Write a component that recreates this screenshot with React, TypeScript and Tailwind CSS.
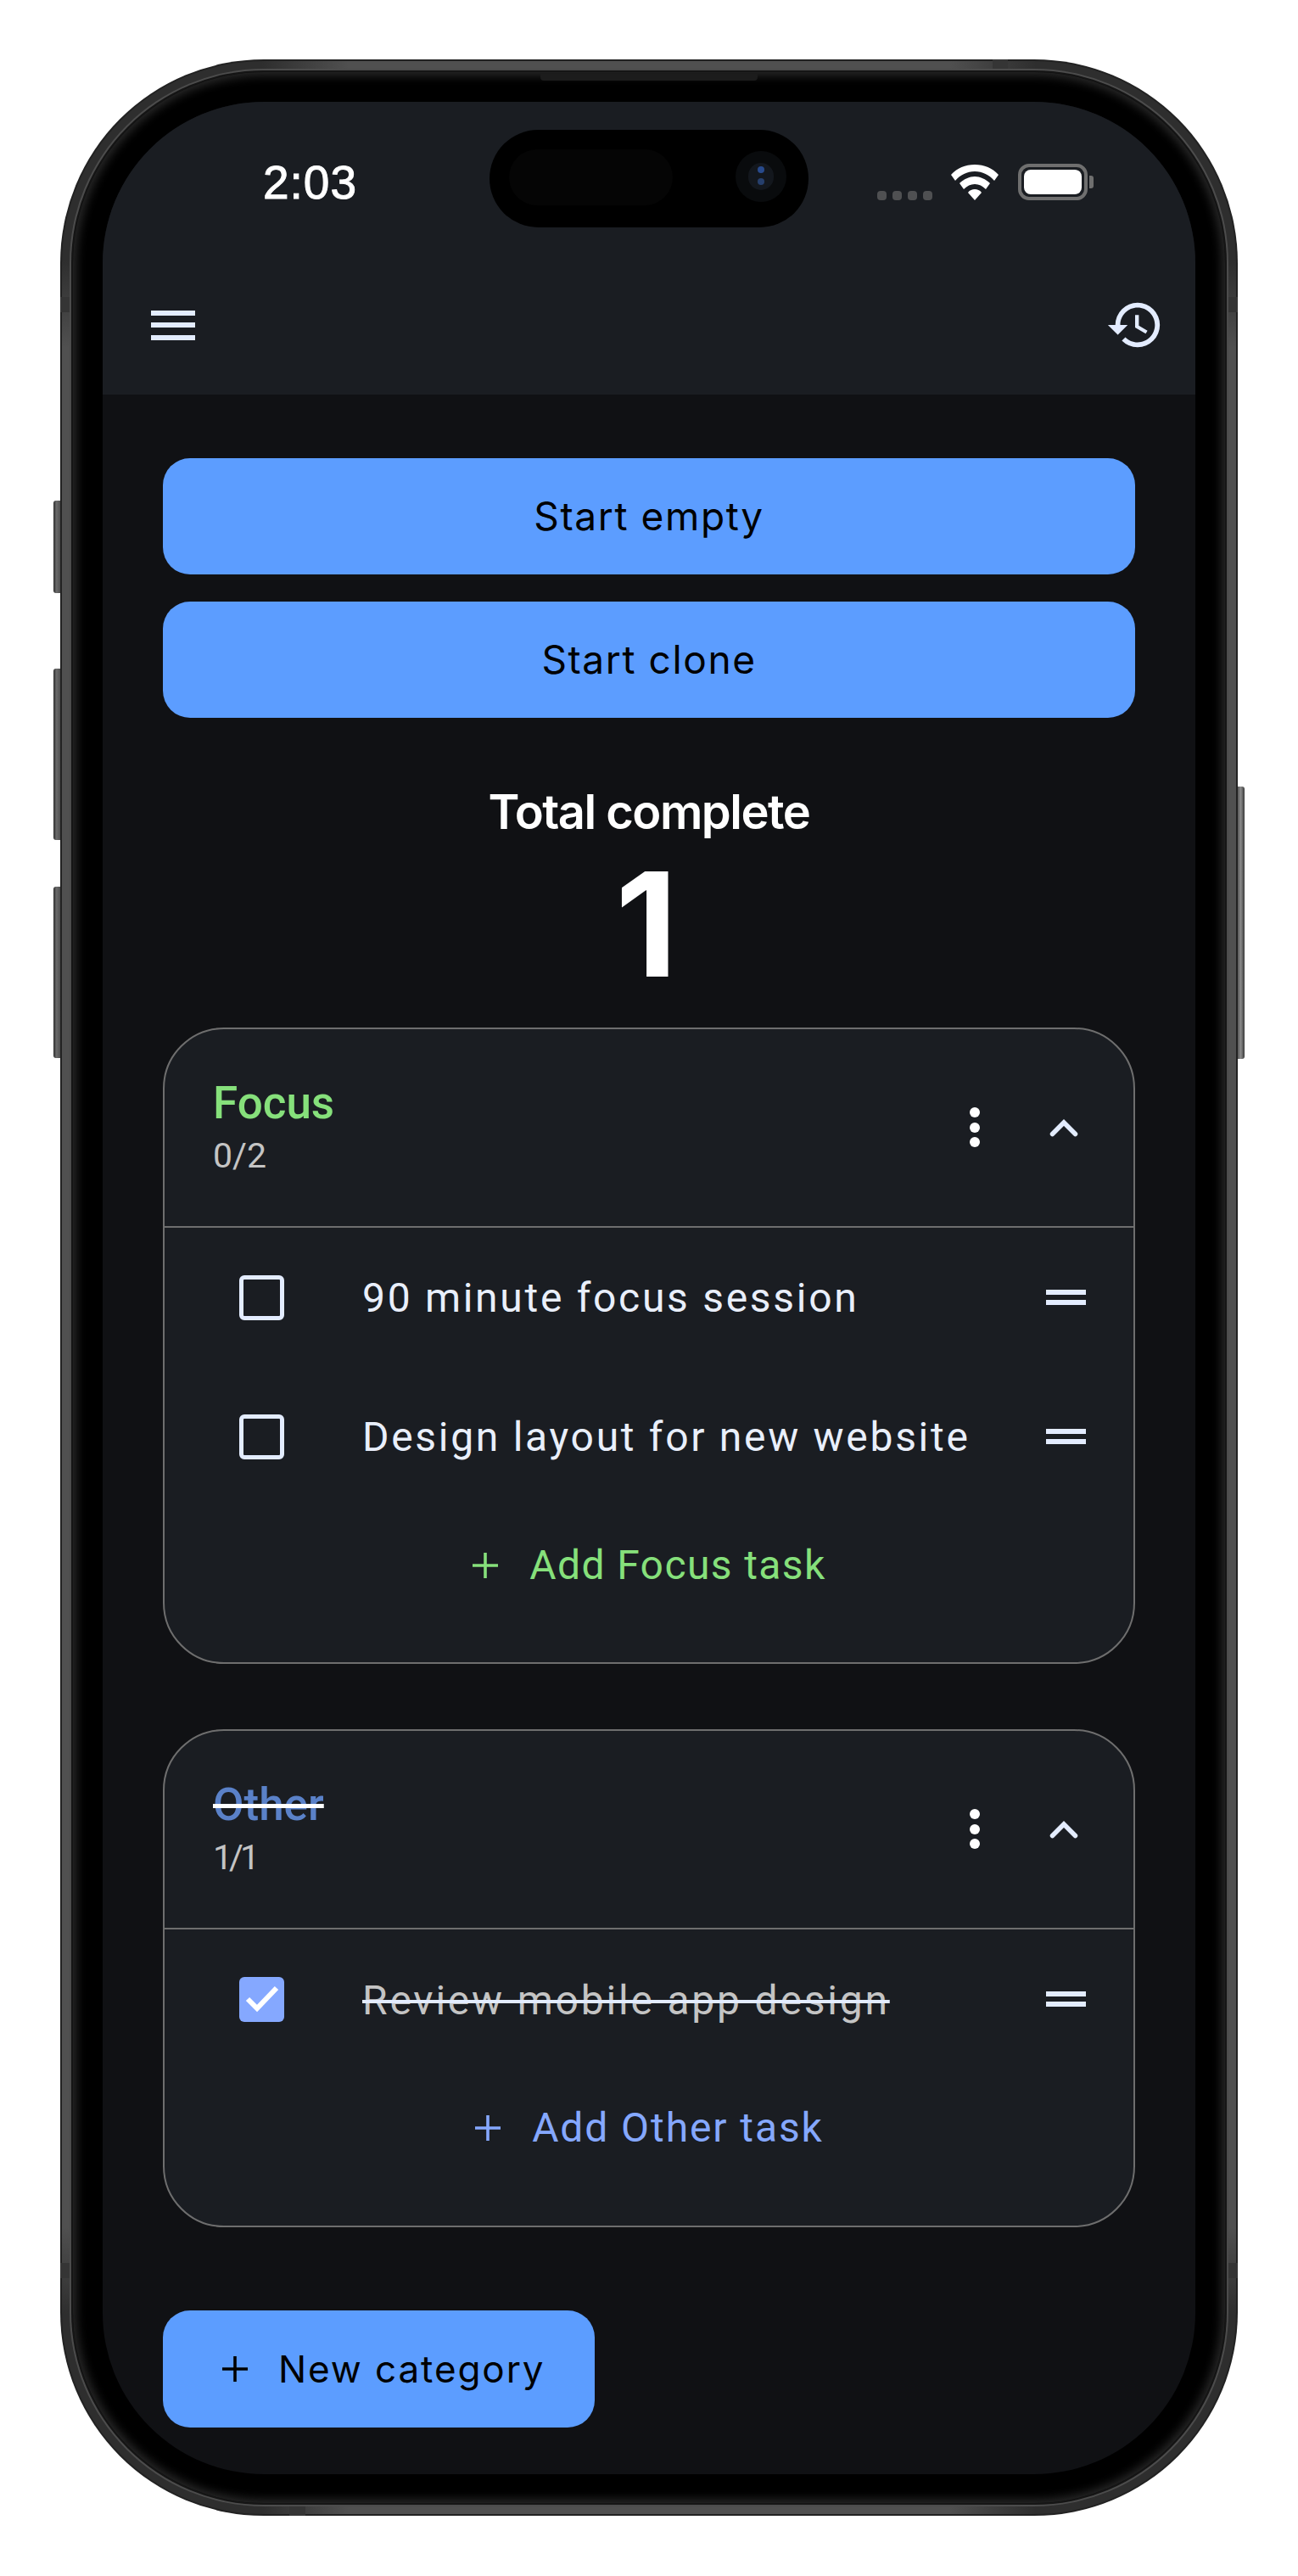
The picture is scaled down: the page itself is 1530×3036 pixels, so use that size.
const R = "font-['Roboto',sans-serif]";
const INTER = "font-['Inter',sans-serif]";

function Check() {
  return <div className="w-[53px] h-[53px] rounded-[6px] border-[5.5px] border-[#e3ecff] shrink-0" />;
}

function Checked() {
  return (
    <div className="w-[53px] h-[53px] rounded-[6px] bg-[#85a8ff] shrink-0 flex items-center justify-center">
      <svg width="40" height="32" viewBox="0 0 40 32" fill="none">
        <path d="M3 16 L14 27 L37 3" stroke="#fff" strokeWidth="6" />
      </svg>
    </div>
  );
}

function Drag() {
  return (
    <div className="flex flex-col gap-[6px] w-[47px]">
      <div className="h-[6px] bg-[#e3ecff]" />
      <div className="h-[6px] bg-[#e3ecff]" />
    </div>
  );
}

function Dots() {
  return (
    <div className="flex flex-col gap-[5.5px]">
      <div className="w-[12px] h-[12px] rounded-full bg-white" />
      <div className="w-[12px] h-[12px] rounded-full bg-white" />
      <div className="w-[12px] h-[12px] rounded-full bg-white" />
    </div>
  );
}

function Chevron() {
  return (
    <svg width="34" height="22" viewBox="0 0 34 22" fill="none">
      <path d="M3.5 18.5 L17 5 L30.5 18.5" stroke="#e3ecff" strokeWidth="5.5" strokeLinecap="round" />
    </svg>
  );
}

function Plus({ color, size = 32 }: { color: string; size?: number }) {
  return (
    <svg width={size} height={size} viewBox="0 0 32 32" fill="none">
      <path d="M16 1 V31 M1 16 H31" stroke={color} strokeWidth="3.6" />
    </svg>
  );
}

function Task({ label, done }: { label: string; done?: boolean }) {
  return (
    <div className="h-[164px] flex items-center pl-[88px] pr-[56px]">
      {done ? <Checked /> : <Check />}
      <div
        className={
          done
            ? "ml-[92px] mt-[3px] flex-1 text-[48px] leading-[56px] tracking-[2.8px] text-[#c4c4c4] line-through decoration-[#e3ecff]"
            : "ml-[92px] mt-[2px] flex-1 text-[48px] leading-[56px] tracking-[2.7px] text-[#e9effb]"
        }
      >
        {label}
      </div>
      <Drag />
    </div>
  );
}

function Card({
  title,
  count,
  done,
  addLabel,
  addColor,
  addClass,
  countClass,
  children,
}: {
  title: string;
  count: string;
  done?: boolean;
  addLabel: string;
  addColor: string;
  addClass: string;
  countClass: string;
  children: React.ReactNode;
}) {
  return (
    <div className="w-[1146px] rounded-[72px] border-2 border-[#6e6e6e] bg-[#1a1d22]">
      <div className="h-[234px] border-b-2 border-[#6e6e6e] flex items-center pl-[57px] pr-[65px]">
        <div className="flex-1 -mt-[2px]">
          <div
            className={
              done
                ? "text-[53px] leading-[60px] font-medium text-[#5a81c8] line-through decoration-white"
                : "text-[53px] leading-[60px] font-medium text-[#86e07b]"
            }
          >
            {title}
          </div>
          <div className={"text-[41px] leading-[48px] mt-[8px] text-[#c4c4c4] " + countClass}>{count}</div>
        </div>
        <div className="flex items-center gap-[82px] -mt-[1px]">
          <Dots />
          <Chevron />
        </div>
      </div>
      {children}
      <div className={"flex items-center justify-center gap-[36px] pb-[45px] text-[48px] " + addClass}>
        <Plus color={addColor} />
        <span>{addLabel}</span>
      </div>
    </div>
  );
}

function PrimaryButton({ label }: { label: string }) {
  return (
    <div className={"h-[137px] w-[1146px] rounded-[32px] bg-[#5c9dff] flex items-center justify-center text-black text-[46px] tracking-[1.6px] " + INTER}>
      {label}
    </div>
  );
}

function StatusBar() {
  return (
    <div className="h-[165px] pt-[64px] pl-[189px] pr-[120px] flex items-start relative">
      <div className="font-['Liberation_Sans',sans-serif] text-[55px] leading-[62px] font-normal text-white tracking-[1px] [-webkit-text-stroke:1px_white]">
        2:03
      </div>
      <div className="absolute left-[456px] top-[33px] w-[376px] h-[115px] rounded-full bg-black">
        <div className="absolute left-[23px] top-[23px] w-[193px] h-[66px] rounded-full bg-[#050505]" />
        <div className="absolute left-[290px] top-[25px] w-[60px] h-[60px] rounded-full bg-[#090b0d]">
          <div className="absolute left-[15px] top-[14px] w-[30px] h-[32px] rounded-full bg-[#13171d]" />
          <div className="absolute left-[26px] top-[18px] w-[8px] h-[8px] rounded-full bg-[#284a8c]" />
          <div className="absolute left-[26px] top-[32px] w-[8px] h-[8px] rounded-full bg-[#263f6c]" />
        </div>
      </div>
      <div className="ml-auto flex items-end h-[43px] mt-[9px]">
        <div className="flex gap-[7px] mr-[22px]">
          {[0, 1, 2, 3].map((i) => (
            <div key={i} className="w-[11px] h-[11px] rounded-[4px] bg-[#4f5052]" />
          ))}
        </div>
        <svg width="56" height="42" viewBox="0 0 56 42" className="mr-[23px]">
          <path d="M28 0 C39 0 49 4 56 12 L51 19 C45 12 37 8 28 8 C19 8 11 12 5 19 L0 12 C7 4 17 0 28 0 Z" fill="#fff" />
          <path d="M28 14 C34 14 41 17 46 22 L41 29 C37 25 33 23 28 23 C23 23 19 25 15 29 L10 22 C15 17 22 14 28 14 Z" fill="#fff" />
          <path d="M28 29 C31 29 34 30 36 33 L28 42 L20 33 C22 30 25 29 28 29 Z" fill="#fff" />
        </svg>
        <div className="w-[82px] h-[43px] rounded-[13px] border-[4px] border-[#6f6f6f] p-[3px]">
          <div className="w-full h-full rounded-[8px] bg-white" />
        </div>
        <div className="w-[5px] h-[15px] rounded-r-[3px] bg-[#6f6f6f] ml-[2px] mb-[14px]" />
      </div>
    </div>
  );
}

function AppBar() {
  return (
    <div className="h-[180px] pt-[16px] flex items-center justify-between pl-[57px] pr-[36px]">
      <div className="flex flex-col gap-[8.5px] w-[52px]">
        <div className="h-[6px] bg-[#e3ecff]" />
        <div className="h-[6px] bg-[#e3ecff]" />
        <div className="h-[6px] bg-[#e3ecff]" />
      </div>
      <svg width="70" height="70" viewBox="0 0 24 24" fill="#e3ecff">
        <path d="M13 3a9 9 0 0 0-9 9H1l3.89 3.89.07.14L9 12H6c0-3.87 3.13-7 7-7s7 3.13 7 7-3.13 7-7 7c-1.93 0-3.68-.79-4.94-2.06l-1.42 1.42A8.954 8.954 0 0 0 13 21a9 9 0 0 0 0-18zm-1 5v5l4.28 2.54.72-1.21-3.5-2.08V8H12z" />
      </svg>
    </div>
  );
}

export default function App() {
  return (
    <div className={"relative w-[1530px] h-[3036px] bg-white overflow-hidden pt-[70px] pl-[71px] " + R}>
      <div className="absolute left-[63px] top-[590px] w-[9px] h-[109px] rounded-l-[3px] bg-[linear-gradient(90deg,#2e2e2e,#6a6a6a_40%,#4a4a4a)]" />
      <div className="absolute left-[63px] top-[788px] w-[9px] h-[202px] rounded-l-[3px] bg-[linear-gradient(90deg,#2e2e2e,#6a6a6a_40%,#4a4a4a)]" />
      <div className="absolute left-[63px] top-[1045px] w-[9px] h-[202px] rounded-l-[3px] bg-[linear-gradient(90deg,#2e2e2e,#6a6a6a_40%,#4a4a4a)]" />
      <div className="absolute left-[1458px] top-[927px] w-[9px] h-[321px] rounded-r-[3px] bg-[linear-gradient(90deg,#4a4a4a,#8a8a8a_50%,#3a3a3a)]" />

      {/* phone body */}
      <div className="relative w-[1388px] h-[2895px] rounded-[240px] p-[15px] shadow-[inset_0_0_0_2px_#222] [background:radial-gradient(circle_340px_at_0_0,#2e2e2e_70%,transparent_100%),radial-gradient(circle_340px_at_100%_0,#2e2e2e_70%,transparent_100%),radial-gradient(circle_340px_at_0_100%,#2e2e2e_70%,transparent_100%),radial-gradient(circle_340px_at_100%_100%,#2e2e2e_70%,transparent_100%),#505050]">
        <div className="absolute left-[1099px] top-0 w-[18px] h-[15px] bg-[#353535]" />
        <div className="absolute left-[270px] bottom-0 w-[19px] h-[15px] bg-[#353535]" />
        <div className="absolute left-0 top-[280px] w-[15px] h-[18px] bg-[#353535]" />
        <div className="absolute right-0 top-[280px] w-[15px] h-[18px] bg-[#353535]" />
        <div className="absolute left-0 bottom-[280px] w-[15px] h-[18px] bg-[#353535]" />
        <div className="absolute right-0 bottom-[280px] w-[15px] h-[18px] bg-[#353535]" />

        {/* inner bezel */}
        <div className="relative w-full h-full rounded-[225px] bg-black p-[35px] shadow-[0_0_0_2px_#151515,0_0_0_4px_#4c4c4c,inset_0_0_12px_4px_#2a2a2a]">
          <div className="absolute left-[551px] top-[2px] w-[256px] h-[8px] rounded-b-[4px] bg-[#1c1c1c]" />
          {/* screen */}
          <div className="w-[1288px] h-[2796px] rounded-[190px] bg-[#101114] overflow-hidden">
            <div className="bg-[#1a1d22] h-[345px]">
              <StatusBar />
              <AppBar />
            </div>
            <div className="pt-[75px] pl-[71px] flex flex-col">
              <PrimaryButton label="Start empty" />
              <div className="h-[32px]" />
              <PrimaryButton label="Start clone" />
              <div className={"w-[1146px] text-center text-white text-[56px] leading-[66px] font-semibold tracking-[-1.5px] mt-[78px] " + INTER}>
                Total complete
              </div>
              <div className={"w-[1146px] pr-[6px] text-center text-white text-[170px] leading-[170px] font-bold mt-[14px] " + INTER}>
                1
              </div>
              <div className="mt-[37px]">
                <Card title="Focus" count="0/2" countClass="" addLabel="Add Focus task" addColor="#86e07b" addClass="h-[184px] tracking-[1.4px] text-[#86e07b]">
                  <Task label="90 minute focus session" />
                  <Task label="Design layout for new website" />
                </Card>
              </div>
              <div className="mt-[77px]">
                <Card title="Other" count="1/1" countClass="tracking-[-4px]" done addLabel="Add Other task" addColor="#85a8ff" addClass="h-[185px] tracking-[1.9px] text-[#85a8ff]">
                  <Task label="Review mobile app design" done />
                </Card>
              </div>
              <div className={"mt-[98px] w-[509px] h-[138px] rounded-[32px] bg-[#5c9dff] flex items-center pl-[69px] text-black text-[44px] tracking-[1.9px] " + INTER}>
                <Plus color="#000" />
                <span className="ml-[35px]">New category</span>
              </div>
            </div>
          </div>
        </div>
      </div>
    </div>
  );
}
